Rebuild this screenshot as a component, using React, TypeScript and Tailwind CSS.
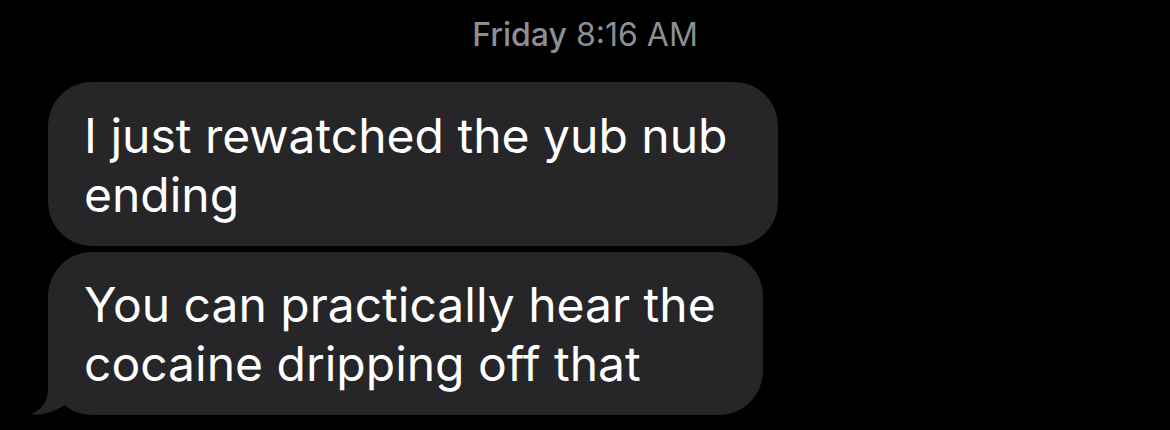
import React from "react";

function Tail() {
  return (
    <svg
      className="absolute left-[-18px] bottom-0"
      width="60"
      height="50"
      viewBox="0 0 60 50"
    >
      <path
        d="M18,0 L18,24 C18,36 12,44 1,49.6 C14,50.4 28,46 38,37 L44,20 L44,0 Z"
        fill="#262629"
      />
    </svg>
  );
}

export default function App() {
  return (
    <div className="w-[1170px] h-[430px] bg-black overflow-hidden font-['Inter',sans-serif] antialiased">
      <div className="pt-[16px] text-center text-[32px] leading-[38px] text-[#8e8e93]">
        <span className="font-medium">Friday</span> <span>8:16 AM</span>
      </div>
      <div className="mt-[28px] pl-[48px] flex flex-col gap-[6px]">
        <div className="w-[730px] rounded-[44px] bg-[#262629] pl-[36px] pt-[24px] pb-[22px] text-white text-[48px] leading-[59px] whitespace-nowrap">
          I just rewatched the yub nub
          <br />
          ending
        </div>
        <div className="relative w-[715px] rounded-[44px] bg-[#262629] pl-[36px] pt-[23px] pb-[22px] text-white text-[48px] leading-[59px] whitespace-nowrap">
          <Tail />
          <span className="relative">
            You can practically hear the
            <br />
            cocaine dripping off that
          </span>
        </div>
      </div>
    </div>
  );
}
